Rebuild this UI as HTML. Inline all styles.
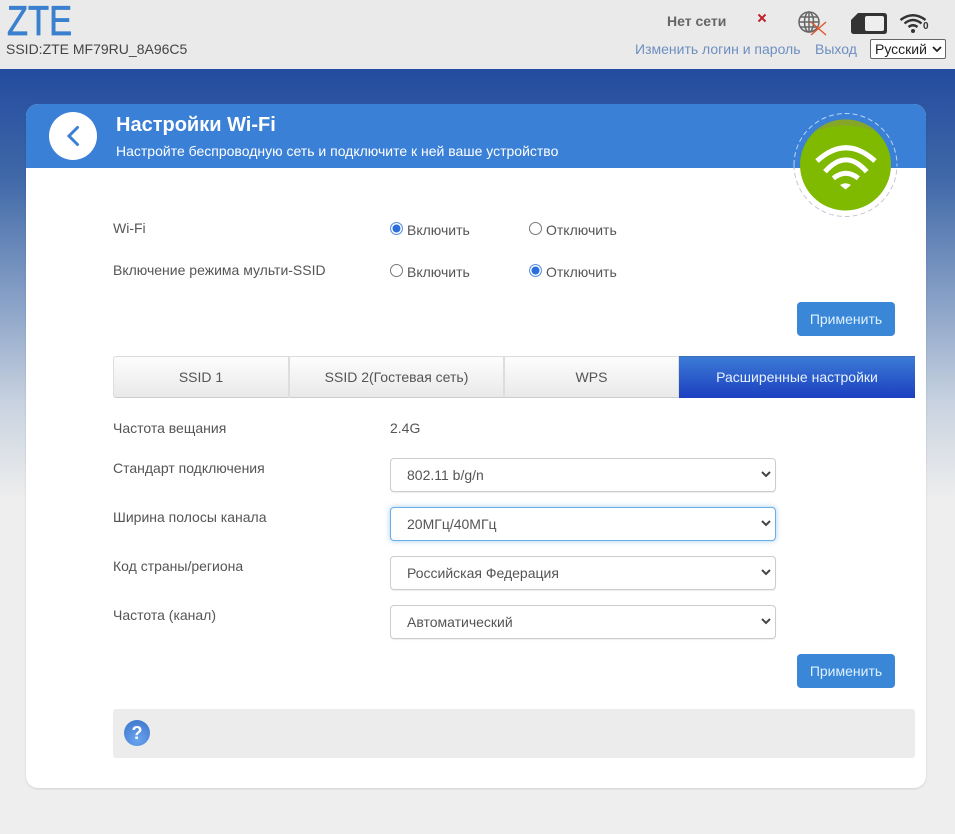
<!DOCTYPE html>
<html lang="ru"><head><meta charset="utf-8"><title>ZTE</title>
<style>
*{box-sizing:border-box}
html,body{margin:0;padding:0}
body{width:955px;height:834px;overflow:hidden;position:relative;background:#eee;font-family:"Liberation Sans",Arial,sans-serif;font-size:14px;color:#555}
.a{position:absolute;white-space:nowrap}
.top{left:0;top:0;width:955px;height:69px;background:#eaeaea}
.bg{left:0;top:69px;width:955px;height:430px;background:linear-gradient(#234b9f 0,#3f68a8 25%,#8ba3c8 55%,#c9d3e0 78%,#eee 100%)}
.card{left:26px;top:104px;width:900px;height:684px;background:#fff;border-radius:12px;box-shadow:0 1px 2px rgba(0,0,0,.12)}
.hd{left:26px;top:104px;width:900px;height:64px;background:#3a80d6;border-radius:12px 12px 0 0}
.lbl{color:#555;font-size:14px;line-height:16px}
.radio{width:13px;height:13px;border-radius:50%;border:1px solid #777;background:#fff}
.radio.on{border:1.5px solid #5b94e0;box-shadow:inset 0 0 0 1.5px #fff;background:#2a6fdb}
.btn{left:797px;width:98px;height:34px;background:#3a87d8;border-radius:4px;color:#dff1ff;font-size:14px;line-height:34px;text-align:center}
.tab{top:356px;height:42px;background:linear-gradient(#fdfdfd,#e9e9e9);border:1px solid #ddd;border-bottom-color:#ccc;text-align:center;line-height:41px;font-size:14px;color:#555}
.sel{left:390px;width:386px;height:34px;background:#fff;border:1px solid #ccc;border-radius:4px;box-shadow:0 1px 1px rgba(0,0,0,.07);padding-left:16px;line-height:33px;font-size:14px;color:#555}
.sel svg{position:absolute;right:2px;top:11px}
.sel.f{border-color:#66afe9;box-shadow:0 0 6px rgba(102,175,233,.6)}
</style></head><body>
<div class="a top"></div>
<div class="a bg"></div>

<div class="a" style="left:7px;top:-3px;font-size:42px;line-height:48px;color:#3a80cf;-webkit-text-stroke:.8px #3a80cf;transform:scaleX(.82);transform-origin:0 0">ZTE</div>
<div class="a" style="left:6px;top:41px;font-size:14px;line-height:16px;color:#444;letter-spacing:0">SSID:ZTE MF79RU_8A96C5</div>

<div class="a" style="left:667px;top:13px;font-size:14px;line-height:16px;font-weight:bold;color:#666">Нет сети</div>
<svg class="a" style="left:757px;top:13px" width="10" height="10" viewBox="0 0 10 10"><path d="M1.5 1.5L8.5 8.5M8.5 1.5L1.5 8.5" stroke="#c0202a" stroke-width="2"/></svg>
<svg class="a" style="left:797px;top:10px" width="32" height="26" viewBox="0 0 32 26" fill="none"><circle cx="12" cy="12" r="10" stroke="#666" stroke-width="1.500"/><ellipse cx="12" cy="12" rx="4.500" ry="10" stroke="#666" stroke-width="1.500"/><path d="M2 12H22M3.500 7H20.500M3.500 17H20.500M12 2V22" stroke="#666" stroke-width="1.500"/><path d="M14 12L29 25M29 12L14 25" stroke="#e2562a" stroke-width="1.400"/></svg>
<svg class="a" style="left:851px;top:13px" width="36" height="21" viewBox="0 0 36 21"><path d="M7 0H33Q36 0 36 3V18Q36 21 33 21H3Q0 21 0 18V7Z" fill="#333"/><rect x="14" y="3" width="19" height="15" rx="2" fill="#eee"/></svg>
<svg class="a" style="left:899px;top:12px" width="28" height="22" viewBox="0 0 28 22" fill="none"><path d="M1.500 7Q14 -2.500 26.500 7" stroke="#333" stroke-width="2.400" transform="translate(0 1)"/><path d="M5.500 11.500Q14 4.500 22.500 11.500" stroke="#333" stroke-width="2.400"/><path d="M9.500 15Q14 11.500 18.500 15" stroke="#333" stroke-width="2.400"/><circle cx="14" cy="19" r="2" fill="#333"/></svg>
<div class="a" style="left:923px;top:21px;font-size:10px;line-height:12px;color:#333;font-weight:bold">0</div>

<div class="a" style="left:635px;top:41px;font-size:14px;line-height:16px;color:#6d8fc0">Изменить логин и пароль</div>
<div class="a" style="left:815px;top:41px;font-size:14px;line-height:16px;color:#6d8fc0">Выход</div>
<div class="a" style="left:870px;top:39px;width:76px;height:20px;background:#fff;border:1px solid #666;border-radius:2px;color:#222;font-size:14px;line-height:18px;padding-left:4px">Русский<svg style="position:absolute;right:3px;top:6px" width="10" height="7" viewBox="0 0 10 7"><path d="M1 1L5 5L9 1" fill="none" stroke="#222" stroke-width="1.800"/></svg></div>

<div class="a card"></div>
<div class="a hd"></div>
<div class="a" style="left:49px;top:112px;width:48px;height:48px;border-radius:50%;background:#fff"></div>
<svg class="a" style="left:65px;top:125px" width="16" height="22" viewBox="0 0 16 22"><path d="M12.500 2.500L4 11L12.500 19.500" fill="none" stroke="#3a80d6" stroke-width="3" stroke-linecap="round"/></svg>
<div class="a" style="left:116px;top:113px;font-size:20px;line-height:24px;font-weight:bold;color:#fff">Настройки Wi-Fi</div>
<div class="a" style="left:116px;top:143px;font-size:14px;line-height:16px;color:#fff;letter-spacing:0">Настройте беспроводную сеть и подключите к ней ваше устройство</div>

<svg class="a" style="left:790px;top:106px" width="112" height="116" viewBox="0 0 112 116" fill="none">
<path d="M4 59A51.500 51.500 0 0 1 107 59" stroke="#b9d4f2" stroke-width="1" stroke-dasharray="5 3"/>
<path d="M4 59A51.500 51.500 0 0 0 107 59" stroke="#c8c4d4" stroke-width="1" stroke-dasharray="5 3"/>
<circle cx="55.500" cy="59" r="45.500" fill="#7fba00"/>
<path d="M24 26A45.500 45.500 0 0 1 87 26A80 80 0 0 0 24 26Z" fill="#86a62a"/>
<path d="M27 55Q56 28.400 85 55" stroke="#fff" stroke-width="5"/>
<path d="M35 65.700Q56 42 76.700 65.700" stroke="#fff" stroke-width="5"/>
<path d="M43.300 72.300Q56 62.300 68.300 72.300" stroke="#fff" stroke-width="5"/>
<path d="M50 79Q55.500 75.500 61 79L55.500 83.500Z" fill="#fff"/>
</svg>

<div class="a lbl" style="left:113px;top:220px">Wi-Fi</div>
<div class="a lbl" style="left:113px;top:262px">Включение режима мульти-SSID</div>
<div class="a radio on" style="left:390px;top:222px"></div>
<div class="a lbl" style="left:407px;top:222px">Включить</div>
<div class="a radio" style="left:529px;top:222px"></div>
<div class="a lbl" style="left:546px;top:222px">Отключить</div>
<div class="a radio" style="left:390px;top:264px"></div>
<div class="a lbl" style="left:407px;top:264px">Включить</div>
<div class="a radio on" style="left:529px;top:264px"></div>
<div class="a lbl" style="left:546px;top:264px">Отключить</div>

<div class="a btn" style="top:302px">Применить</div>

<div class="a tab" style="left:113px;width:176px;border-radius:3px 0 0 3px">SSID 1</div>
<div class="a tab" style="left:289px;width:215px">SSID 2(Гостевая сеть)</div>
<div class="a tab" style="left:504px;width:175px">WPS</div>
<div class="a tab" style="left:679px;width:236px;background:linear-gradient(#3b7bd6,#1c3fc0);border:0;border-top:1px solid #3a70b8;color:#e8f2ff">Расширенные настройки</div>

<div class="a lbl" style="left:113px;top:420px">Частота вещания</div>
<div class="a lbl" style="left:390px;top:420px">2.4G</div>
<div class="a lbl" style="left:113px;top:460px">Стандарт подключения</div>
<div class="a lbl" style="left:113px;top:509px">Ширина полосы канала</div>
<div class="a lbl" style="left:113px;top:558px">Код страны/региона</div>
<div class="a lbl" style="left:113px;top:607px">Частота (канал)</div>

<div class="a sel" style="top:458px">802.11 b/g/n<svg width="14" height="10" viewBox="0 0 14 10"><path d="M3 2L7 6L11 2" fill="none" stroke="#444" stroke-width="2"/></svg></div>
<div class="a sel f" style="top:507px">20МГц/40МГц<svg width="14" height="10" viewBox="0 0 14 10"><path d="M3 2L7 6L11 2" fill="none" stroke="#444" stroke-width="2"/></svg></div>
<div class="a sel" style="top:556px">Российская Федерация<svg width="14" height="10" viewBox="0 0 14 10"><path d="M3 2L7 6L11 2" fill="none" stroke="#444" stroke-width="2"/></svg></div>
<div class="a sel" style="top:605px">Автоматический<svg width="14" height="10" viewBox="0 0 14 10"><path d="M3 2L7 6L11 2" fill="none" stroke="#444" stroke-width="2"/></svg></div>

<div class="a btn" style="top:654px">Применить</div>

<div class="a" style="left:113px;top:709px;width:802px;height:49px;background:#ececec;border-radius:3px"></div>
<div class="a" style="left:124px;top:720px;width:26px;height:26px;border-radius:50%;background:radial-gradient(circle at 50% 75%,#6aa5f0,#3a72c8);color:#fff;font-weight:bold;font-size:18px;line-height:26px;text-align:center">?</div>
</body></html>
